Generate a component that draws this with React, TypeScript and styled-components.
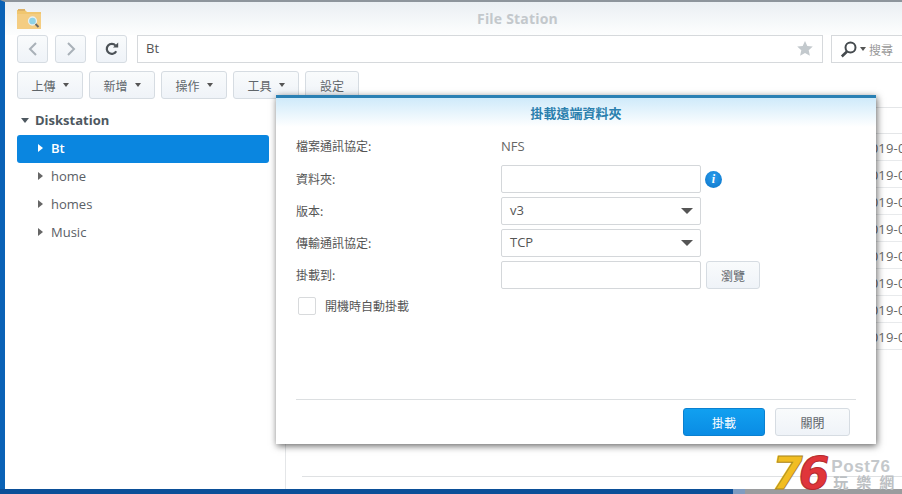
import React from "react";
import styled, { createGlobalStyle } from "styled-components";

const Global = createGlobalStyle`
  html, body { margin: 0; padding: 0; background: #fff; }
  body { width: 902px; height: 494px; overflow: hidden; font-family: "Open Sans", "Noto Sans CJK TC", sans-serif; }
  * { box-sizing: border-box; }
`;
const Screen = styled.div`
  position: relative; width: 902px; height: 494px; overflow: hidden;
  display: flex; flex-direction: column; background: #fff;
`;
const Win = styled.div`
  flex: 1; min-height: 0; display: flex; flex-direction: column;
  border-left: 5px solid #0a62b6; border-top: 2px solid #8d959c;
`;
const TitleBar = styled.div`
  height: 33px; flex: none; display: flex; align-items: center; padding-left: 12px; position: relative;
  background: linear-gradient(#eaeff3, #fdfefe);
`;
const Title = styled.div`
  position: absolute; left: 472px; top: 7px; font: bold 14px "Open Sans", sans-serif; color: #c3c8cc; letter-spacing: 0.2px;
`;
const Tools = styled.div`
  height: 27px; flex: none; display: flex; padding-left: 12px;
`;
const Tools2 = styled(Tools)`
  margin-top: 9px; gap: 6px;
`;
const Btn = styled.button<{ $w: number; $ml?: number }>`
  width: ${(p) => p.$w}px; height: 28px; margin-left: ${(p) => p.$ml ?? 0}px; flex: none; padding: 0;
  display: flex; align-items: center; justify-content: center; gap: 7px;
  border: 1px solid #d6dce2; border-radius: 3px; background: linear-gradient(#f9fbfc, #eff3f8);
  font: 12px "Noto Sans CJK TC", sans-serif; color: #5f656a;
`;
const SmallCaret = styled.i`
  width: 0; height: 0; border: 3.5px solid transparent; border-top: 4px solid #555; border-bottom: 0; display: block;
`;
const PathBox = styled.div`
  width: 686px; height: 28px; margin-left: 10px; flex: none; display: flex; align-items: center; justify-content: space-between;
  padding: 0 9px 2px 8px; border: 1px solid #d6d9dc; background: #fff; font-size: 13px; color: #555;
`;
const SearchBox = styled.div`
  width: 80px; height: 28px; margin-left: 8px; flex: none; display: flex; align-items: center; gap: 3px;
  padding-left: 8px; border: 1px solid #d6d9dc; border-right: 0; background: #fff;
  font: 12px "Noto Sans CJK TC", sans-serif; color: #999;
`;
const Main = styled.div`
  flex: 1; min-height: 0; display: flex;
`;
const Side = styled.div`
  width: 281px; flex: none; padding: 9px 0 0 12px; border-right: 1px solid #e4e6e8;
`;
const RootRow = styled.div`
  height: 28px; display: flex; align-items: center; gap: 6px; padding: 0 0 2px 4px;
  font: bold 13px "Open Sans", sans-serif; color: #4e5860;
`;
const RootCaret = styled.i`
  width: 0; height: 0; border: 4px solid transparent; border-top: 5px solid #4e5860; border-bottom: 0; display: block;
`;
const TreeRow = styled.div<{ $on?: boolean }>`
  width: 252px; height: 28px; display: flex; align-items: center; gap: 8px; padding: 0 0 2px 21px; border-radius: 3px;
  font: ${(p) => (p.$on ? 600 : 400)} 13px "Open Sans", sans-serif;
  color: ${(p) => (p.$on ? "#fff" : "#5a6066")}; background: ${(p) => (p.$on ? "#0a86e0" : "transparent")};
`;
const TreeCaret = styled.i<{ $on?: boolean }>`
  width: 0; height: 0; border: 4px solid transparent; border-left: 5px solid ${(p) => (p.$on ? "#fff" : "#666")}; border-right: 0; display: block;
`;
const Pane = styled.div`
  flex: 1; min-width: 0; margin-top: 9px; display: flex; flex-direction: column; overflow: hidden;
`;
const ListHead = styled.div`
  height: 27px; flex: none; border-top: 1px solid #e4e6e8; border-bottom: 1px solid #e4e6e8;
`;
const Row = styled.div`
  height: 27px; flex: none; display: flex; align-items: center; padding: 1px 0 0 577px; white-space: nowrap;
  border-bottom: 1px solid #e8eaec; font-size: 13px; color: #666; letter-spacing: 0.2px;
`;
const Spacer = styled.div`
  flex: 1;
`;
const Status = styled.div`
  height: 13px; flex: none; margin-left: 16px; border-top: 1px solid #dfe1e3;
`;
const TaskBar = styled.div`
  height: 5px; flex: none; display: flex;
`;
const Seg = styled.div<{ $c: string; $w?: number }>`
  background: ${(p) => p.$c}; ${(p) => (p.$w ? `width:${p.$w}px;` : "flex:1;")}
`;
const Dialog = styled.div`
  position: absolute; left: 276px; top: 95px; width: 600px; height: 349px; display: flex; flex-direction: column;
  background: #fff; border-top: 3px solid #2a80b4;
  box-shadow: 1px 2px 7px rgba(0,0,0,.6);
`;
const DlgHead = styled.div`
  height: 29px; flex: none; display: flex; align-items: center; justify-content: center; padding-bottom: 1px;
  background: linear-gradient(#cfeafa, #fff);
  font: bold 13px "Noto Sans CJK TC", sans-serif; color: #2b80ae;
`;
const Form = styled.div`
  flex: 1; padding: 4px 20px 0; display: flex; flex-direction: column; gap: 4px;
`;
const FormRow = styled.div`
  height: 28px; display: flex; align-items: center;
`;
const FirstRow = styled(FormRow)`
  height: 30px;
`;
const Label = styled.div`
  width: 205px; flex: none; padding-bottom: 2px; font: 12px "Noto Sans CJK TC", sans-serif; color: #555;
`;
const Val = styled.div`
  font-size: 13px; color: #666;
`;
const Input = styled.div`
  width: 200px; height: 28px; flex: none; border: 1px solid #d4d7da; border-radius: 2px; background: #fff;
`;
const Select = styled(Input)`
  display: flex; align-items: center; justify-content: space-between; padding: 0 7px 2px 8px;
  font-size: 13px; color: #555;
`;
const SelCaret = styled.i`
  width: 0; height: 0; margin-top: 2px; border: 6px solid transparent; border-top: 6px solid #555; border-bottom: 0; display: block;
`;
const Check = styled.div`
  width: 18px; height: 18px; margin: 0 9px 0 2px; border: 1px solid #d8dadc; border-radius: 2px; flex: none;
`;
const CheckText = styled.div`
  padding-bottom: 2px; font: 12px "Noto Sans CJK TC", sans-serif; color: #555;
`;
const CheckRow = styled(FormRow)`
  margin-top: -1px;
`;
const Foot = styled.div`
  height: 45px; flex: none; margin: 0 20px; padding: 8px 6px 0 0; border-top: 1px solid #dcdfe1;
  display: flex; justify-content: flex-end; gap: 10px;
`;
const Primary = styled.button`
  width: 82px; height: 28px; padding: 0; border: 1px solid #0a80d0; border-radius: 3px;
  background: linear-gradient(#11a0f0, #0a8ce4); color: #fff; font: 12px "Noto Sans CJK TC", sans-serif;
`;
const Logo = styled.div`
  position: absolute; left: 772px; top: 458px; width: 130px; height: 32px; display: flex; align-items: center; white-space: nowrap;
`;
const Seven = styled.span`
  font: italic 900 44px/32px "DejaVu Sans", sans-serif; color: #f1bd22; letter-spacing: -4px; -webkit-text-stroke: 1px #b08a1a;
`;
const Six = styled.span`
  font: italic 900 44px/32px "DejaVu Sans", sans-serif; color: #e0353a; -webkit-text-stroke: 1px #b32a2e;
`;
const LogoSide = styled.div`
  margin-left: 2px; display: flex; flex-direction: column;
`;
const LogoEn = styled.span`
  font: bold 17px/15px "Liberation Sans", sans-serif; letter-spacing: 0.6px; color: #c4c8cb;
`;
const LogoCn = styled.span`
  font: bold 15px/15px "Noto Sans CJK TC", sans-serif; letter-spacing: 8px; color: #bcc0c3; padding-left: 2px;
`;

const Back = () => (
  <svg width="12" height="16" viewBox="0 0 12 16"><path d="M9 2 3 8l6 6" fill="none" stroke="#a9b1b8" strokeWidth="2" /></svg>
);
const Forward = () => (
  <svg width="12" height="16" viewBox="0 0 12 16"><path d="M3 2l6 6-6 6" fill="none" stroke="#a9b1b8" strokeWidth="2" /></svg>
);
const Refresh = () => (
  <svg width="14" height="14" viewBox="0 0 14 14">
    <path d="M11.2 9.2A5 5 0 1 1 10.6 3.6" fill="none" stroke="#4c5257" strokeWidth="2.2" />
    <path d="M8 5.6h5.2V.6z" fill="#4c5257" />
  </svg>
);
const Folder = () => (
  <svg width="25" height="21" viewBox="0 0 25 21">
    <path d="M0 2h8l2 2h14v17H0z" fill="#f0c66f" />
    <path d="M0 6h24v15H0z" fill="#f4cd82" />
    <path d="M1 1h7v2H1z" fill="#dcb268" />
    <circle cx="15.5" cy="13" r="4" fill="#8fd3e6" stroke="#e9eff0" strokeWidth="1.3" />
    <path d="M18.5 16l3 3" stroke="#6c6a62" strokeWidth="2" />
  </svg>
);
const Star = () => (
  <svg width="16" height="15" viewBox="0 0 16 15">
    <path d="M8 0l2.3 5 5.5.6-4.1 3.7 1.2 5.5L8 12l-4.9 2.8 1.2-5.5L.2 5.6 5.7 5z" fill="#c3c9cd" />
  </svg>
);
const Search = () => (
  <svg width="17" height="17" viewBox="0 0 17 17">
    <circle cx="10.5" cy="6.5" r="5" fill="none" stroke="#444a4e" strokeWidth="2" />
    <path d="M7 10.5 1.8 15.5" stroke="#444a4e" strokeWidth="2.6" />
  </svg>
);
const InfoWrap = styled.div`
  width: 17px; height: 17px; margin-left: 4px; border-radius: 50%; flex: none; background: radial-gradient(circle at 50% 35%, #2a9cec, #0a74c8);
  color: #fff; display: flex; align-items: center; justify-content: center; font: italic bold 12px "Liberation Serif", serif;
`;

export default function App() {
  const dates = Array.from({ length: 8 });
  return (
    <Screen>
      <Global />
      <Win>
        <TitleBar>
          <Folder />
          <Title>File Station</Title>
        </TitleBar>
        <Tools>
          <Btn $w={31}><Back /></Btn>
          <Btn $w={31} $ml={7}><Forward /></Btn>
          <Btn $w={31} $ml={10}><Refresh /></Btn>
          <PathBox>Bt<Star /></PathBox>
          <SearchBox><Search /><SmallCaret />搜尋</SearchBox>
        </Tools>
        <Tools2>
          <Btn $w={66}>上傳<SmallCaret /></Btn>
          <Btn $w={66}>新增<SmallCaret /></Btn>
          <Btn $w={66}>操作<SmallCaret /></Btn>
          <Btn $w={66}>工具<SmallCaret /></Btn>
          <Btn $w={54}>設定</Btn>
        </Tools2>
        <Main>
          <Side>
            <RootRow><RootCaret />Diskstation</RootRow>
            <TreeRow $on><TreeCaret $on />Bt</TreeRow>
            <TreeRow><TreeCaret />home</TreeRow>
            <TreeRow><TreeCaret />homes</TreeRow>
            <TreeRow><TreeCaret />Music</TreeRow>
          </Side>
          <Pane>
            <ListHead />
            {dates.map((_, i) => <Row key={i}>2019-0</Row>)}
            <Spacer />
            <Status />
          </Pane>
        </Main>
      </Win>
      <TaskBar>
        <Seg $c="#0b4f98" $w={733} />
        <Seg $c="#7f9cc0" $w={12} />
        <Seg $c="#9a9c9e" />
      </TaskBar>
      <Dialog>
        <DlgHead>掛載遠端資料夾</DlgHead>
        <Form>
          <FirstRow><Label>檔案通訊協定:</Label><Val>NFS</Val></FirstRow>
          <FormRow><Label>資料夾:</Label><Input /><InfoWrap>i</InfoWrap></FormRow>
          <FormRow><Label>版本:</Label><Select>v3<SelCaret /></Select></FormRow>
          <FormRow><Label>傳輸通訊協定:</Label><Select>TCP<SelCaret /></Select></FormRow>
          <FormRow><Label>掛載到:</Label><Input /><Btn $w={54} $ml={5}>瀏覽</Btn></FormRow>
          <CheckRow><Check /><CheckText>開機時自動掛載</CheckText></CheckRow>
        </Form>
        <Foot>
          <Primary>掛載</Primary>
          <Btn $w={75}>關閉</Btn>
        </Foot>
      </Dialog>
      <Logo>
        <Seven>7</Seven><Six>6</Six>
        <LogoSide>
          <LogoEn>Post76</LogoEn>
          <LogoCn>玩樂網</LogoCn>
        </LogoSide>
      </Logo>
    </Screen>
  );
}
